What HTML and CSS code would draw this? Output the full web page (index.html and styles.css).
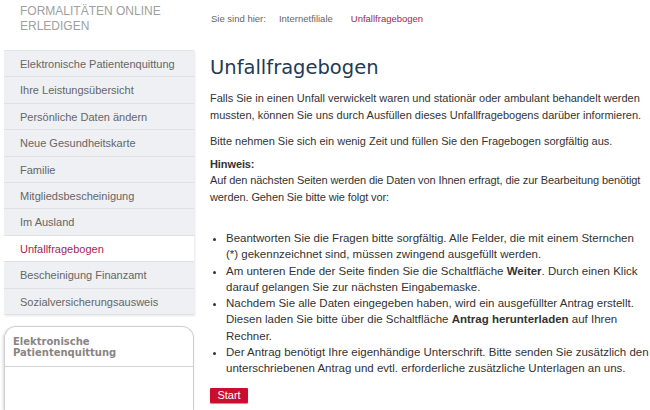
FILE: index.html
```html
<!DOCTYPE html>
<html lang="de">
<head>
<meta charset="utf-8">
<title>Unfallfragebogen</title>
<link rel="stylesheet" href="styles.css">
</head>
<body>
<div class="page">
  <div class="side">
    <div class="brand">FORMALITÄTEN ONLINE<br>ERLEDIGEN</div>
    <ul class="nav">
      <li>Elektronische Patientenquittung</li>
      <li>Ihre Leistungsübersicht</li>
      <li>Persönliche Daten ändern</li>
      <li>Neue Gesundheitskarte</li>
      <li>Familie</li>
      <li>Mitgliedsbescheinigung</li>
      <li>Im Ausland</li>
      <li class="active">Unfallfragebogen</li>
      <li>Bescheinigung Finanzamt</li>
      <li>Sozialversicherungsausweis</li>
    </ul>
    <div class="box">
      <div class="box-title">Elektronische<br>Patientenquittung</div>
      <div class="box-body"></div>
    </div>
  </div>
  <div class="main">
    <div class="crumbs">
      <span>Sie sind hier:</span>
      <span class="crumb">Internetfiliale</span>
      <span class="crumb current">Unfallfragebogen</span>
    </div>
    <h1>Unfallfragebogen</h1>
    <p class="intro">Falls Sie in einen Unfall verwickelt waren und stationär oder ambulant behandelt werden mussten, können Sie uns durch Ausfüllen dieses Unfallfragebogens darüber informieren.</p>
    <p class="ask">Bitte nehmen Sie sich ein wenig Zeit und füllen Sie den Fragebogen sorgfältig aus.</p>
    <p class="hint"><strong>Hinweis:</strong><br>Auf den nächsten Seiten werden die Daten von Ihnen erfragt, die zur Bearbeitung benötigt werden. Gehen Sie bitte wie folgt vor:</p>
    <ul class="steps">
      <li>Beantworten Sie die Fragen bitte sorgfältig. Alle Felder, die mit einem Sternchen (*) gekennzeichnet sind, müssen zwingend ausgefüllt werden.</li>
      <li>Am unteren Ende der Seite finden Sie die Schaltfläche <strong>Weiter</strong>. Durch einen Klick darauf gelangen Sie zur nächsten Eingabemaske.</li>
      <li>Nachdem Sie alle Daten eingegeben haben, wird ein ausgefüllter Antrag erstellt. Diesen laden Sie bitte über die Schaltfläche <strong>Antrag herunterladen</strong> auf Ihren Rechner.</li>
      <li>Der Antrag benötigt Ihre eigenhändige Unterschrift. Bitte senden Sie zusätzlich den unterschriebenen Antrag und evtl. erforderliche zusätzliche Unterlagen an uns.</li>
    </ul>
    <button class="start">Start</button>
  </div>
</div>
</body>
</html>
```
FILE: styles.css
```css
* { box-sizing: border-box; }
html, body { margin: 0; padding: 0; background: #fff; }
body { font-family: "Liberation Sans", Arial, sans-serif; color: #333; overflow: hidden; }
.page { display: flex; width: 650px; height: 410px; overflow: hidden; }
.side { width: 194px; padding-left: 4px; flex: none; }
.brand {
  height: 50px; padding: 4px 0 0 16px;
  font-size: 12px; line-height: 15px; color: #a0a0a0;
}
.nav {
  list-style: none; margin: 0; padding: 0;
  background: #eef0f3; border-top: 1px solid #e2e4e8;
  box-shadow: 1px 1px 2px #e6e7ea;
}
.nav li {
  height: 26.4px; line-height: 26px; padding-left: 16px;
  font-size: 11px; color: #666; border-bottom: 1px solid #dfe1e5;
  white-space: nowrap;
}
.nav li.active { background: #fff; color: #a3284f; }
.box {
  margin-top: 11px; height: 84px;
  border: 1px solid #cfcfcf; border-bottom: 0;
  border-radius: 12px 12px 0 0;
  box-shadow: -1px 1px 3px #d8d8d8;
}
.box-title {
  padding: 9px 8px 0 8px; height: 40px;
  font-family: "DejaVu Sans", Verdana, sans-serif; font-weight: bold;
  font-size: 10px; line-height: 11px; color: #8a8484;
  border-bottom: 1px solid #d4d4d4;
}
.main { flex: 1; padding-left: 16px; padding-right: 1px; }
.crumbs {
  height: 50px; padding-top: 13px; padding-left: 1px;
  font-size: 9.5px; color: #666; display: flex; gap: 13px;
}
.crumbs .current { color: #a3284f; margin-left: 5px; }
h1 {
  margin: 3px 0 7px 0; font-family: "DejaVu Sans", Verdana, sans-serif;
  font-weight: normal; font-size: 19.5px; line-height: 30px; color: #1f3a52;
}
p { margin: 0; font-size: 11px; line-height: 16.5px; }
.intro { margin-bottom: 10px; }
.ask { margin-bottom: 6px; }
.hint { letter-spacing: -0.1px; }
.steps { margin: 25px 0 0 0; padding-left: 16px; font-size: 11.5px; line-height: 16.25px; }
.start {
  margin-top: 12px; display: block;
  background: #c8102e; color: #fff; border: 0; border-radius: 1px;
  font-family: "Liberation Sans", Arial, sans-serif; font-size: 11px;
  width: 38px; height: 15px; padding: 0; line-height: 15px;
  box-shadow: 0 1px 1px #999;
}
```
